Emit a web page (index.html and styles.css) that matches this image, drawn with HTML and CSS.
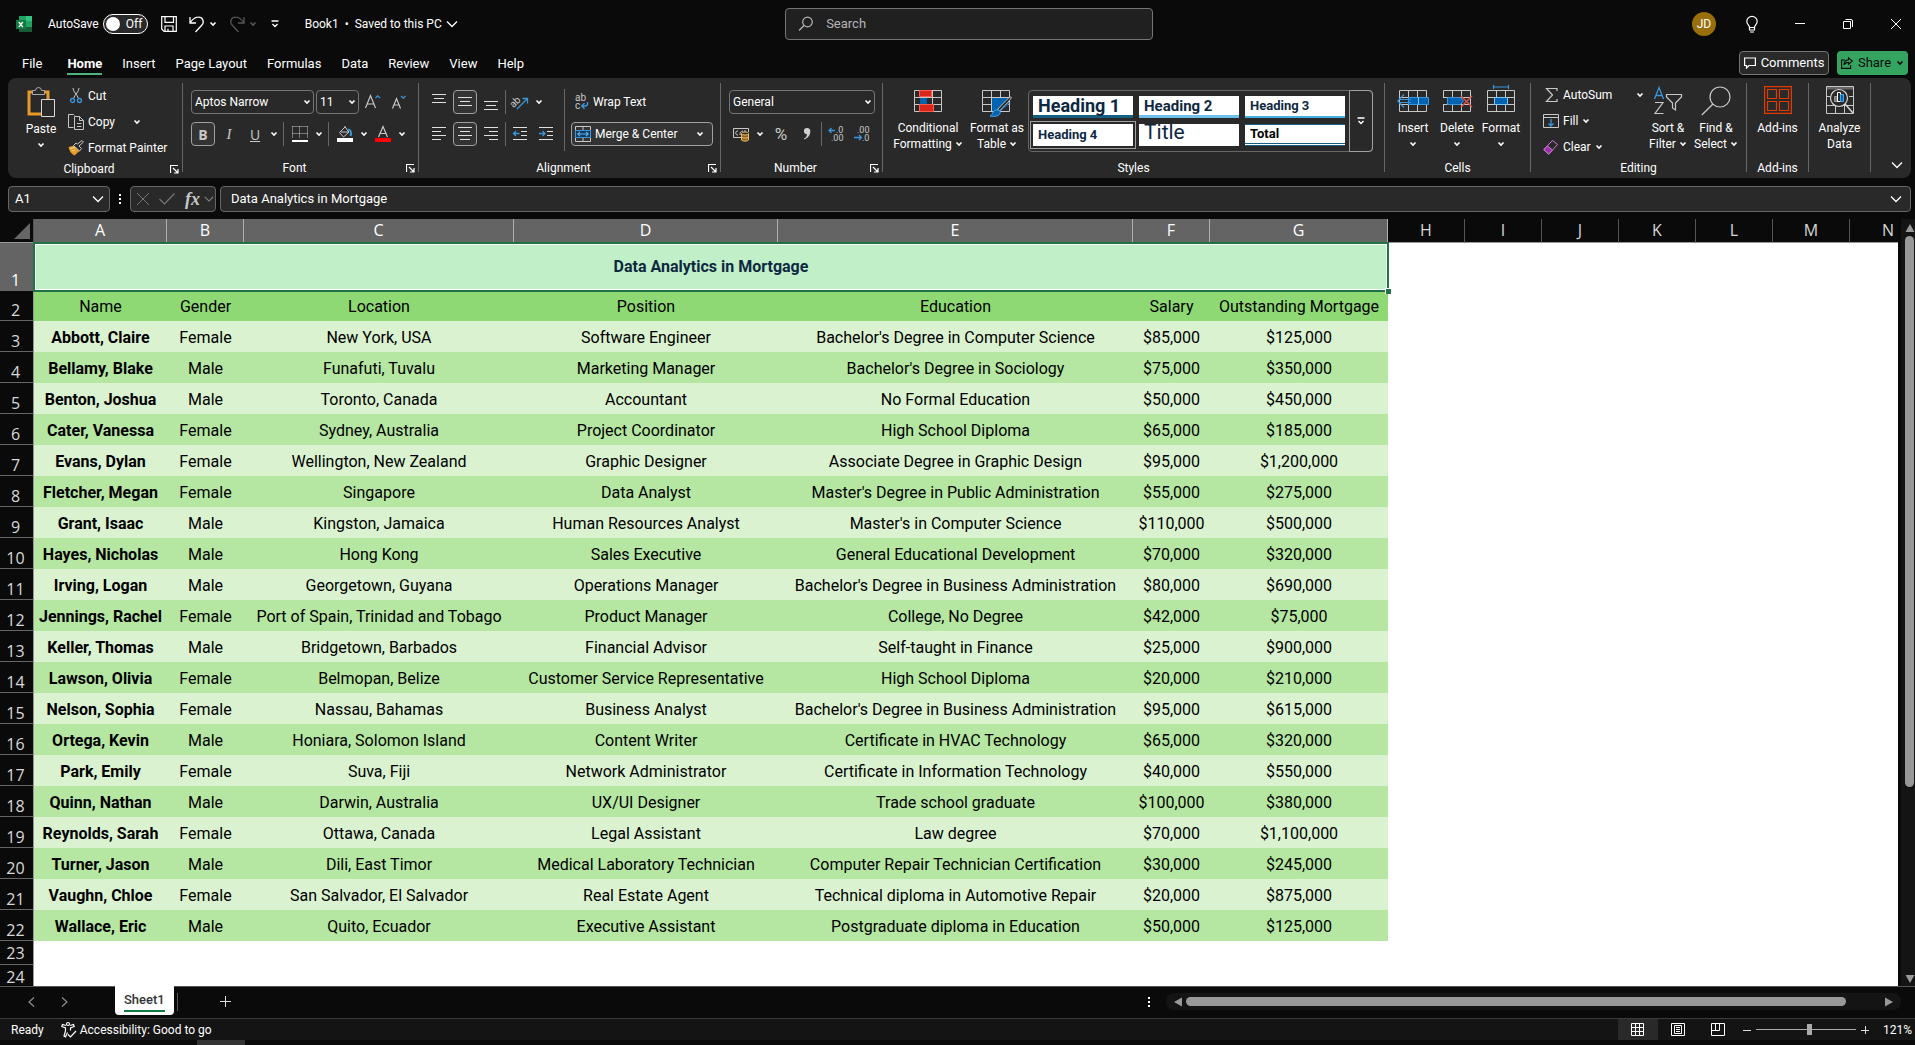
FILE: index.html
```html
<!DOCTYPE html>
<html lang="en">
<head>
    <meta charset="UTF-8">
    <meta name="viewport" content="width=device-width, initial-scale=1.0">
    <title>Book1 - Excel</title>
    <link rel="stylesheet" href="styles.css">
</head>
<body>
    <!-- shared icons -->
    <svg class="defs" width="0" height="0">
        <symbol id="chev" viewBox="0 0 8 8"><path d="M1.5 2.5 4 5l2.5-2.5" fill="none" stroke="currentColor" stroke-width="1.6"/></symbol>
        <symbol id="chev-big" viewBox="0 0 12 12"><path d="M1 3.5 6 8.5l5-5" fill="none" stroke="currentColor" stroke-width="1.3"/></symbol>
        <symbol id="launch" viewBox="0 0 9 9"><path d="M.5 8V.5H8M3 3l4.5 4.5M8 4v4H4" fill="none" stroke="currentColor" stroke-width="1.2"/></symbol>
        <symbol id="grid" viewBox="0 0 28 22"><path d="M.5.5h27v21H.5zM.5 7.5h27M.5 14.5h27M9.5.5v21M18.5.5v21" fill="none" stroke="#c8c8c8"/></symbol>
    </svg>

    <div class="app">
        <header class="title-bar">
            <div class="title-left">
                <svg class="logo" width="16" height="16" viewBox="0 0 16 16">
                    <path d="M3 0h13v16H3z" fill="#21a366"/><path d="M10 0h6v5h-6z" fill="#33c481"/><path d="M3 5h7v6H3z" fill="#107c41"/><path d="M3 11h13v5H3z" fill="#185c37"/>
                    <path d="M0 4h10v9H0z" fill="#107c41"/><path d="m2.8 6 4 5M6.8 6l-4 5" stroke="#fff" stroke-width="1.3"/>
                </svg>
                <label class="autosave">AutoSave
                    <input type="checkbox">
                    <span class="toggle"><span class="knob"></span>Off</span>
                </label>
                <button class="qat save" aria-label="Save">
                    <svg width="16" height="16" viewBox="0 0 16 16"><path d="M.7.7h14.6v14.6H3L.7 13zM4 .7v5.6h8.5V.7M4 15.3V10h8v5.3M7 15.3v-2.6" fill="none" stroke="#fff" stroke-width="1.2"/></svg>
                </button>
                <button class="qat" aria-label="Undo">
                    <svg width="16" height="17" viewBox="0 0 16 17"><path d="M1 1v6h6M1.3 6.5C4 2.5 7 1.2 9.5 1.2a4.6 4.6 0 0 1 3.2 8L6.5 16" fill="none" stroke="#fff" stroke-width="1.3"/></svg>
                    <svg class="ch" width="8" height="8"><use href="#chev"/></svg>
                </button>
                <button class="qat off" aria-label="Redo">
                    <svg width="16" height="17" viewBox="0 0 16 17"><path d="M15 1v6H9M14.7 6.5C12 2.5 9 1.2 6.5 1.2a4.6 4.6 0 0 0-3.2 8L9.5 16" fill="none" stroke="currentColor" stroke-width="1.3"/></svg>
                    <svg class="ch" width="8" height="8"><use href="#chev"/></svg>
                </button>
                <button class="qat" aria-label="Customize Quick Access Toolbar">
                    <svg width="8" height="8" viewBox="0 0 8 8"><path d="M.5 1h7M1.5 4 4 6.5 6.5 4" fill="none" stroke="#fff" stroke-width="1.4"/></svg>
                </button>
                <button class="doc-name">Book1 &nbsp;•&nbsp; Saved to this PC <svg width="12" height="12"><use href="#chev-big"/></svg></button>
            </div>
            <label class="search">
                <svg width="16" height="16" viewBox="0 0 16 16"><circle cx="9.5" cy="6" r="4.8" fill="none" stroke="#b5b5b5" stroke-width="1.2"/><path d="m6 9.5-5 5" stroke="#b5b5b5" stroke-width="1.2"/></svg>
                <input type="text" placeholder="Search" aria-label="Search">
            </label>
            <div class="title-right">
                <button class="win" aria-label="Account"><span class="avatar">JD</span></button>
                <button class="win" aria-label="Tips">
                    <svg width="12" height="17" viewBox="0 0 12 17"><path d="M3.5 11.5C3.5 9 .8 8.500.8 5.5a5 5 0 0 1 10.4 0c0 3-2.7 3.5-2.7 6zM3.5 11.5V14h5v-2.5M4 16h4" fill="none" stroke="#fff" stroke-width="1.2"/></svg>
                </button>
                <button class="win" aria-label="Minimize"><svg width="10" height="10" viewBox="0 0 10 10"><path d="M0 4.5h10" stroke="#fff"/></svg></button>
                <button class="win" aria-label="Restore"><svg width="10" height="10" viewBox="0 0 10 10"><path d="M.5 2.5h7v7h-7zM2.5.5H8A1.5 1.5 0 0 1 9.5 2v6" fill="none" stroke="#fff"/></svg></button>
                <button class="win close" aria-label="Close"><svg width="10" height="10" viewBox="0 0 10 10"><path d="m0 0 10 10M10 0 0 10" stroke="#fff"/></svg></button>
            </div>
        </header>

        <nav class="tabs">
            <a class="tab file" href="#">File</a>
            <a class="tab active" href="#">Home</a>
            <a class="tab" href="#">Insert</a>
            <a class="tab" href="#">Page Layout</a>
            <a class="tab" href="#">Formulas</a>
            <a class="tab" href="#">Data</a>
            <a class="tab" href="#">Review</a>
            <a class="tab" href="#">View</a>
            <a class="tab" href="#">Help</a>
            <div class="tab-actions">
                <button class="btn-comments">
                    <svg width="12" height="12" viewBox="0 0 12 12"><path d="M.6 1h10.800v7.500H5L2.500 11V8.500H.6z" fill="none" stroke="#fff" stroke-width="1.2"/></svg>
                    Comments
                </button>
                <button class="btn-share">
                    <svg width="12" height="12" viewBox="0 0 12 12"><path d="M4 3H.6v8.400h9V8M7.500.8 11.300 4 7.500 7.200V5.400C5.500 5.400 4 6 3 8c0-3 1.500-5 4.500-5.300z" fill="none" stroke="#0a0a0a" stroke-width="1.1"/></svg>
                    Share
                    <svg width="8" height="8"><use href="#chev"/></svg>
                </button>
            </div>
        </nav>

        <div class="ribbon">
            <section class="group clipboard">
                <div class="group-body">
                    <button class="big paste">
                        <svg width="28" height="30" viewBox="0 0 28 30"><path d="M7 5H2v22h13" fill="none" stroke="#e69a28" stroke-width="3"/><path d="M16 5h5v7" fill="none" stroke="#e69a28" stroke-width="3"/><path d="M5.500 7.500v-4h3a3 3 0 0 1 6 0h3v4z" fill="#292929" stroke="#a8a8a8"/><path d="M14.500 12.500h13v17h-13z" fill="#292929" stroke="#d8d8d8"/></svg>
                        <span>Paste</span>
                        <svg class="ch" width="8" height="8"><use href="#chev"/></svg>
                    </button>
                    <div class="stack">
                        <button class="small">
                            <svg width="16" height="16" viewBox="0 0 16 16"><path d="M5 0c0 4 4 6 5.500 10.500M11 0c0 4-4 6-5.500 10.500" fill="none" stroke="#c8c8c8"/><circle cx="4.500" cy="12.500" r="2" fill="none" stroke="#3a96dd" stroke-width="1.3"/><circle cx="11.500" cy="12.500" r="2" fill="none" stroke="#3a96dd" stroke-width="1.3"/></svg>
                            Cut
                        </button>
                        <button class="small">
                            <svg width="16" height="16" viewBox="0 0 16 16"><path d="M5.500 13.500h-5v-13h5l1 1" fill="none" stroke="#c8c8c8"/><path d="M6.500 2.500h5l4 4v9h-9zM11.500 2.500v4h4M9 9.500h4.500M9 12.500h4.500" fill="none" stroke="#c8c8c8"/></svg>
                            Copy
                            <svg class="ch copy-ch" width="8" height="8"><use href="#chev"/></svg>
                        </button>
                        <button class="small">
                            <svg width="16" height="16" viewBox="0 0 16 16"><path d="m.5 7 6-1.500 5 5.500-5 4.500C3.500 14 1.500 11.500.5 7z" fill="#e69a28"/><path d="m2 8.500 5-1M3.500 11l4-1" stroke="#ffd98c"/><path d="m5.500 5.500 6 5.500 2-2.500-2.500-2.500 4.500-4L14 .5 9.500 4 8 3z" fill="#292929" stroke="#c8c8c8"/></svg>
                            Format Painter
                        </button>
                    </div>
                </div>
                <div class="group-foot"><span>Clipboard</span><svg width="9" height="9"><use href="#launch"/></svg></div>
            </section>

            <section class="group font">
                <div class="group-body col">
                    <div class="row">
                        <select class="drop font-name" aria-label="Font"><option>Aptos Narrow</option></select>
                        <select class="drop font-size" aria-label="Font size"><option>11</option></select>
                        <button class="icon" aria-label="Increase font size"><svg width="18" height="18" viewBox="0 0 18 18"><path d="m1.500 15 5-12.500L11.500 15M3.300 11h6.400" fill="none" stroke="#c8c8c8" stroke-width="1.2"/><path d="m11.500 5 2.200-2.200L16 5" fill="none" stroke="#3a96dd" stroke-width="1.3"/></svg></button>
                        <button class="icon" aria-label="Decrease font size"><svg width="18" height="18" viewBox="0 0 18 18"><path d="M2.500 15.500 6.500 5.500l4 10M4 12h5" fill="none" stroke="#c8c8c8" stroke-width="1.2"/><path d="M11 3l2.200 2.200L15.500 3" fill="none" stroke="#3a96dd" stroke-width="1.3"/></svg></button>
                    </div>
                    <div class="row">
                        <button class="icon on bold">B</button>
                        <button class="icon italic">I</button>
                        <button class="icon underline">U</button>
                        <button class="ch-btn" aria-label="Underline options"><svg width="8" height="8"><use href="#chev"/></svg></button>
                        <span class="sep"></span>
                        <button class="icon" aria-label="Borders"><svg width="16" height="16" viewBox="0 0 16 16"><path d="M.5.5h15M.5 7.500h15M.5.5v12M7.500.5v12M15.500.5v12" fill="none" stroke="#c8c8c8" stroke-dasharray="1 1"/><path d="M0 15h16" stroke="#fff" stroke-width="2"/></svg></button>
                        <button class="ch-btn" aria-label="Border options"><svg width="8" height="8"><use href="#chev"/></svg></button>
                        <span class="sep"></span>
                        <button class="icon" aria-label="Fill color"><svg width="16" height="16" viewBox="0 0 16 16"><path d="M2.500 6.500 8 1l4 5-5.500 5zM8 1V0M4 6h8" fill="none" stroke="#c8c8c8"/><path d="M11 3.500c3 0 3.500 3 2.500 6.500" fill="none" stroke="#3a96dd" stroke-width="2"/><path d="M0 12h16v4H0z" fill="#fff"/></svg></button>
                        <button class="ch-btn" aria-label="Fill options"><svg width="8" height="8"><use href="#chev"/></svg></button>
                        <button class="icon" aria-label="Font color"><svg width="16" height="16" viewBox="0 0 16 16"><path d="M3.500 11 8 .5 12.500 11M5 7.500h6" fill="none" stroke="#c8c8c8" stroke-width="1.2"/><path d="M0 12h16v4H0z" fill="#f00"/></svg></button>
                        <button class="ch-btn" aria-label="Font color options"><svg width="8" height="8"><use href="#chev"/></svg></button>
                    </div>
                </div>
                <div class="group-foot"><span>Font</span><svg width="9" height="9"><use href="#launch"/></svg></div>
            </section>

            <section class="group alignment">
                <div class="group-body">
                    <div class="col">
                        <div class="row">
                            <button class="icon" aria-label="Top align"><svg width="14" height="18" viewBox="0 0 14 18"><path d="M0 1.500h14M2 5.500h10M0 9.500h14" stroke="#e0e0e0"/></svg></button>
                            <button class="icon on" aria-label="Middle align"><svg width="14" height="18" viewBox="0 0 14 18"><path d="M0 4.500h14M2 8.500h10M0 12.500h14" stroke="#e0e0e0"/></svg></button>
                            <button class="icon" aria-label="Bottom align"><svg width="14" height="18" viewBox="0 0 14 18"><path d="M0 8.500h14M2 12.500h10M0 16.500h14" stroke="#e0e0e0"/></svg></button>
                            <span class="sep"></span>
                            <button class="icon" aria-label="Orientation"><svg width="18" height="16" viewBox="0 0 18 16"><text class="glyph" x="-1" y="10" transform="rotate(-45 6 8)">ab</text><path d="M6 15 16 5M11.500 4.500H16.500V9.500" fill="none" stroke="#3a96dd" stroke-width="1.3"/></svg></button>
                            <button class="ch-btn" aria-label="Orientation options"><svg width="8" height="8"><use href="#chev"/></svg></button>
                        </div>
                        <div class="row">
                            <button class="icon" aria-label="Align left"><svg width="14" height="14" viewBox="0 0 14 14"><path d="M0 .5h14M0 4.500h9M0 8.500h14M0 12.500h9" stroke="#e0e0e0"/></svg></button>
                            <button class="icon on" aria-label="Center"><svg width="14" height="14" viewBox="0 0 14 14"><path d="M0 .5h14M2 4.500h10M0 8.500h14M2 12.500h10" stroke="#e0e0e0"/></svg></button>
                            <button class="icon" aria-label="Align right"><svg width="14" height="14" viewBox="0 0 14 14"><path d="M0 .5h14M5 4.500h9M0 8.500h14M5 12.500h9" stroke="#e0e0e0"/></svg></button>
                            <span class="sep"></span>
                            <button class="icon" aria-label="Decrease indent"><svg width="14" height="14" viewBox="0 0 14 14"><path d="M0 .5h14M8 4.500h6M8 8.500h6M0 12.500h14" stroke="#e0e0e0"/><path d="M6.500 6.500h-6M3 4 .5 6.500 3 9" fill="none" stroke="#3a96dd" stroke-width="1.3"/></svg></button>
                            <button class="icon" aria-label="Increase indent"><svg width="14" height="14" viewBox="0 0 14 14"><path d="M0 .5h14M8 4.500h6M8 8.500h6M0 12.500h14" stroke="#e0e0e0"/><path d="M0 6.500h6M3.500 4 6 6.500 3.500 9" fill="none" stroke="#3a96dd" stroke-width="1.3"/></svg></button>
                        </div>
                    </div>
                    <span class="sep tall"></span>
                    <div class="col">
                        <button class="wide"><svg width="14" height="16" viewBox="0 0 14 16"><text class="glyph" x="0" y="7">ab</text><text class="glyph" x="0" y="15">c</text><path d="M12.500 8v2c0 1.500-1 2-2.500 2H7M9.500 9.200 6.700 12l2.800 2.800" fill="none" stroke="#3a96dd" stroke-width="1.5"/></svg>Wrap Text</button>
                        <button class="wide merge"><svg width="16" height="16" viewBox="0 0 16 16"><path d="M.5 4V.5h15V4M8 .5V4M.5 12v3.500h15V12M8 12v3.500" fill="none" stroke="#c8c8c8"/><path d="M.5 4.500h15v7H.5z" fill="#123a5c" stroke="#3a96dd"/><path d="M3 8h10M5 5.800 2.800 8 5 10.200M11 5.800 13.200 8 11 10.200" fill="none" stroke="#5cb3f0" stroke-width="1.2"/></svg>Merge &amp; Center<svg class="ch end" width="8" height="8"><use href="#chev"/></svg></button>
                    </div>
                </div>
                <div class="group-foot"><span>Alignment</span><svg width="9" height="9"><use href="#launch"/></svg></div>
            </section>

            <section class="group number">
                <div class="group-body col">
                    <div class="row">
                        <select class="drop format" aria-label="Number format"><option>General</option></select>
                    </div>
                    <div class="row">
                        <button class="icon" aria-label="Accounting format"><svg width="16" height="16" viewBox="0 0 16 16"><path d="M8 11.500H.5v-9h15V6" fill="none" stroke="#c8c8c8"/><path d="M5 5c-3-.5-3 4.500 0 4M10 5C7.500 5 7 7 7 9M13 5h-2" fill="none" stroke="#c8c8c8"/><path d="M8.500 7.500v6.500c1 1.500 6 1.500 7 0V7.500" fill="#8a6420" stroke="#f0c060"/><ellipse cx="12" cy="7.500" rx="3.500" ry="1.500" fill="#292929" stroke="#f0c060"/><path d="M8.500 11c1 1.500 6 1.500 7 0" fill="none" stroke="#f0c060"/></svg></button>
                        <button class="ch-btn" aria-label="Accounting options"><svg width="8" height="8"><use href="#chev"/></svg></button>
                        <button class="icon pct">%</button>
                        <button class="icon" aria-label="Comma style"><svg width="8" height="14" viewBox="0 0 8 14"><path d="M4 1a3 3 0 0 1 3.300 3.500C7.300 8 5 11 1.500 12.500l-.5-.8C3 10.500 4 9 4 7.200A3 3 0 1 1 4 1z" fill="#d0d0d0"/></svg></button>
                        <span class="sep"></span>
                        <button class="icon" aria-label="Increase decimal"><svg width="16" height="16" viewBox="0 0 16 16"><text class="glyph sm" x="8" y="7">.0</text><text class="glyph sm" x="3" y="15">.00</text><path d="M7 4.500H1M3.500 2 1 4.500 3.500 7" fill="none" stroke="#3a96dd" stroke-width="1.3"/></svg></button>
                        <button class="icon" aria-label="Decrease decimal"><svg width="16" height="16" viewBox="0 0 16 16"><text class="glyph sm" x="3" y="7">.00</text><text class="glyph sm" x="8" y="15">.0</text><path d="M0 11.500h7M5 9l2.500 2.500L5 14" fill="none" stroke="#3a96dd" stroke-width="1.3"/></svg></button>
                    </div>
                </div>
                <div class="group-foot"><span>Number</span><svg width="9" height="9"><use href="#launch"/></svg></div>
            </section>

            <section class="group styles">
                <div class="group-body">
                    <button class="big cond">
                        <svg width="28" height="28" viewBox="0 0 28 28"><g transform="translate(0 3)"><use href="#grid" width="28" height="22"/><path d="M5.500.5h12v6h-12z" fill="#d8261c" stroke="#ff5a4a"/><path d="M6 8h7v6H6z" fill="#0063b1"/><path d="M5.500 14.500h14v7h-14z" fill="#d8261c" stroke="#ff5a4a"/></g></svg>
                        <span>Conditional<br>Formatting <svg width="8" height="8"><use href="#chev"/></svg></span>
                    </button>
                    <button class="big fmt-table">
                        <svg width="30" height="28" viewBox="0 0 30 28"><g transform="translate(0 3)"><use href="#grid" width="28" height="22"/><path d="M10 8h17v6l-8 7h-9z" fill="#0063b1"/><path d="M28.500 7c2 0 1 2-11 14l-2-1.500C27 7 28 7 28.500 7z" fill="#292929" stroke="#c8c8c8"/><path d="M8 26c3-1 2-5 6-6 3-.5 5 1 4 3.500C17 26 13 27 8 26z" fill="#0063b1" stroke="#4aa8e8"/></g></svg>
                        <span>Format as<br>Table <svg width="8" height="8"><use href="#chev"/></svg></span>
                    </button>
                    <div class="gallery">
                        <div class="gallery-grid">
                            <button class="cell-style h1">Heading 1</button>
                            <button class="cell-style h2">Heading 2</button>
                            <button class="cell-style h3">Heading 3</button>
                            <button class="cell-style h4">Heading 4</button>
                            <button class="cell-style title">Title</button>
                            <button class="cell-style total">Total</button>
                        </div>
                        <button class="gallery-more" aria-label="More styles"><svg width="8" height="8" viewBox="0 0 8 8"><path d="M.5 1h7M1.500 4 4 6.500 6.500 4" fill="none" stroke="#fff" stroke-width="1.4"/></svg></button>
                    </div>
                </div>
                <div class="group-foot"><span>Styles</span></div>
            </section>

            <section class="group cells">
                <div class="group-body">
                    <button class="big">
                        <svg width="32" height="30" viewBox="0 0 32 30"><use href="#grid" x="2" y="4" width="28" height="22"/><path d="M11.500 11.500h20v7h-20z" fill="#0063b1" stroke="#3a96dd"/><path d="M21.500 11v8" stroke="#7cc4f5"/><path d="M14 13.500H2M14 16.500H2M7 8.500.8 15 7 21.500" fill="none" stroke="#3a96dd" stroke-width="1.2"/></svg>
                        <span>Insert</span>
                        <svg class="ch" width="8" height="8"><use href="#chev"/></svg>
                    </button>
                    <button class="big">
                        <svg width="32" height="30" viewBox="0 0 32 30"><use href="#grid" x="2" y="4" width="28" height="22"/><path d="M0 12h6v6H0z" fill="#292929"/><path d="M6.500 11.500h13l3 3.500-3 3.500h-13z" fill="#0063b1" stroke="#3a96dd"/><path d="m20 10 11 11M31 10 20 21" stroke="#e0504a" stroke-width="1.5"/></svg>
                        <span>Delete</span>
                        <svg class="ch" width="8" height="8"><use href="#chev"/></svg>
                    </button>
                    <button class="big">
                        <svg width="32" height="30" viewBox="0 0 32 30"><use href="#grid" x="2" y="4" width="28" height="22"/><path d="M9.500 11.500h13v7h-13z" fill="#0063b1" stroke="#7cc4f5"/><path d="M8.500-1v4M23.500-1v4M8.500 1h15" stroke="#3a96dd" stroke-width="1.2"/></svg>
                        <span>Format</span>
                        <svg class="ch" width="8" height="8"><use href="#chev"/></svg>
                    </button>
                </div>
                <div class="group-foot"><span>Cells</span></div>
            </section>

            <section class="group editing">
                <div class="group-body">
                    <div class="stack">
                        <button class="small">
                            <svg width="16" height="16" viewBox="0 0 16 16"><path d="M14 4V1.500H3.500L9.500 8l-6 6.500H14V12" fill="none" stroke="#c8c8c8" stroke-width="1.2"/></svg>
                            AutoSum
                            <svg class="ch end" width="8" height="8"><use href="#chev"/></svg>
                        </button>
                        <button class="small">
                            <svg width="16" height="16" viewBox="0 0 16 16"><path d="M.5 1.500h15v13H.5zM.5 4.500h15" fill="none" stroke="#c8c8c8"/><path d="M8 6v7M5.500 10.500 8 13l2.500-2.500" fill="none" stroke="#3a96dd" stroke-width="1.3"/></svg>
                            Fill <svg class="ch" width="8" height="8"><use href="#chev"/></svg>
                        </button>
                        <button class="small">
                            <svg width="16" height="16" viewBox="0 0 16 16"><path d="M.8 10.500 9.500 1.500l5 4-8.700 9.700z" fill="none" stroke="#d080d8"/><path d="M.8 10.500 4.500 7l5 4-3.700 4.200z" fill="#9a30a8" stroke="#d080d8"/></svg>
                            Clear <svg class="ch" width="8" height="8"><use href="#chev"/></svg>
                        </button>
                    </div>
                    <button class="big pair">
                        <svg width="30" height="30" viewBox="0 0 30 30"><path d="M1.500 13 6 1.500 10.500 13M3 9.500h6" fill="none" stroke="#3a96dd" stroke-width="1.3"/><path d="M2 16.500h8L2 27.500h8.500" fill="none" stroke="#c8c8c8" stroke-width="1.2"/><path d="M13.500 8.500h15V11l-6 6v7l-3-2v-5l-6-6z" fill="none" stroke="#c8c8c8" stroke-width="1.2"/></svg>
                        <span>Sort &amp;<br>Filter <svg width="8" height="8"><use href="#chev"/></svg></span>
                    </button>
                    <button class="big pair">
                        <svg width="30" height="30" viewBox="0 0 30 30"><circle cx="19" cy="11" r="10" fill="none" stroke="#c8c8c8" stroke-width="1.2"/><path d="M12 18 .8 29" stroke="#c8c8c8" stroke-width="1.3"/></svg>
                        <span>Find &amp;<br>Select <svg width="8" height="8"><use href="#chev"/></svg></span>
                    </button>
                </div>
                <div class="group-foot"><span>Editing</span></div>
            </section>

            <section class="group addins">
                <div class="group-body">
                    <button class="big">
                        <svg width="28" height="28" viewBox="0 0 28 28"><path d="M.6.6h26.800v26.800H.6zM3.500 3.500h9v9h-9zM15.500 3.500h9v9h-9zM3.500 15.500h9v9h-9zM15.500 15.500h9v9h-9z" fill="none" stroke="#e03c00" stroke-width="1.2"/></svg>
                        <span>Add-ins</span>
                    </button>
                </div>
                <div class="group-foot"><span>Add-ins</span></div>
            </section>

            <section class="group addins">
                <div class="group-body">
                    <button class="big">
                        <svg width="28" height="28" viewBox="0 0 28 28"><path d="M.5.5h27v3H.5z" fill="#666"/><path d="M.5.5h27v27H.5zM.5 10.500h4M.5 19.500h27M9.500 20v7.500M18.500 20v7.500M23 10.500h4.500" fill="none" stroke="#c8c8c8"/><circle cx="13" cy="12" r="8.500" fill="#292929" stroke="#d8d8d8" stroke-width="1.2"/><path d="m19 18 8 9" stroke="#d8d8d8" stroke-width="1.5"/><path d="M8.500 10.500h3v5h-3z" fill="#777" stroke="#999"/><path d="M11.500 6.500h3v9h-3z" fill="none" stroke="#fff"/><path d="M14.500 8.500h3v7h-3z" fill="#0063b1" stroke="#4aa8e8"/></svg>
                        <span>Analyze<br>Data</span>
                    </button>
                </div>
            </section>
            <button class="collapse" aria-label="Collapse ribbon"><svg width="12" height="12"><use href="#chev-big"/></svg></button>
        </div>

        <div class="formula-bar">
            <label class="box name-box"><input type="text" value="A1" aria-label="Name box"><svg width="12" height="12"><use href="#chev-big"/></svg></label>
            <span class="dots"></span>
            <div class="box fx-box">
                <svg width="12" height="12" viewBox="0 0 12 12"><path d="m0 0 12 12M12 0 0 12" stroke="#777"/></svg>
                <svg width="16" height="12" viewBox="0 0 16 12"><path d="m.5 6 5 5L15.500.5" fill="none" stroke="#777" stroke-width="1.2"/></svg>
                <span class="fx">fx</span>
                <svg class="dim" width="10" height="10"><use href="#chev-big" width="10" height="10"/></svg>
            </div>
            <label class="box formula"><input type="text" value="Data Analytics in Mortgage" aria-label="Formula bar"><svg width="12" height="12"><use href="#chev-big"/></svg></label>
        </div>

        <main class="sheet">
            <div class="grid-view">
                <table>
                    <colgroup>
                        <col class="c-row"><col class="c-a"><col class="c-s"><col class="c-c"><col class="c-d"><col class="c-e"><col class="c-s"><col class="c-g"><col class="c-s"><col class="c-s"><col class="c-s"><col class="c-s"><col class="c-s"><col class="c-s"><col>
                    </colgroup>
                    <thead>
                        <tr><th class="corner"><svg width="16" height="16" viewBox="0 0 16 16"><path d="M16 0v16H0z" fill="#666"/></svg></th><th class="sel">A</th><th class="sel">B</th><th class="sel">C</th><th class="sel">D</th><th class="sel">E</th><th class="sel">F</th><th class="sel">G</th><th>H</th><th>I</th><th>J</th><th>K</th><th>L</th><th>M</th><th class="last">N</th></tr>
                    </thead>
                    <tbody>
                        <tr class="r-title"><th class="sel">1</th><td colspan="7">Data Analytics in Mortgage<span class="handle"></span></td></tr>
                        <tr class="r-head"><th>2</th><td>Name</td><td>Gender</td><td>Location</td><td>Position</td><td>Education</td><td>Salary</td><td>Outstanding Mortgage</td></tr>
                        <tr><th>3</th><td>Abbott, Claire</td><td>Female</td><td>New York, USA</td><td>Software Engineer</td><td>Bachelor's Degree in Computer Science</td><td>$85,000</td><td>$125,000</td></tr>
                        <tr><th>4</th><td>Bellamy, Blake</td><td>Male</td><td>Funafuti, Tuvalu</td><td>Marketing Manager</td><td>Bachelor's Degree in Sociology</td><td>$75,000</td><td>$350,000</td></tr>
                        <tr><th>5</th><td>Benton, Joshua</td><td>Male</td><td>Toronto, Canada</td><td>Accountant</td><td>No Formal Education</td><td>$50,000</td><td>$450,000</td></tr>
                        <tr><th>6</th><td>Cater, Vanessa</td><td>Female</td><td>Sydney, Australia</td><td>Project Coordinator</td><td>High School Diploma</td><td>$65,000</td><td>$185,000</td></tr>
                        <tr><th>7</th><td>Evans, Dylan</td><td>Female</td><td>Wellington, New Zealand</td><td>Graphic Designer</td><td>Associate Degree in Graphic Design</td><td>$95,000</td><td>$1,200,000</td></tr>
                        <tr><th>8</th><td>Fletcher, Megan</td><td>Female</td><td>Singapore</td><td>Data Analyst</td><td>Master's Degree in Public Administration</td><td>$55,000</td><td>$275,000</td></tr>
                        <tr><th>9</th><td>Grant, Isaac</td><td>Male</td><td>Kingston, Jamaica</td><td>Human Resources Analyst</td><td>Master's in Computer Science</td><td>$110,000</td><td>$500,000</td></tr>
                        <tr><th>10</th><td>Hayes, Nicholas</td><td>Male</td><td>Hong Kong</td><td>Sales Executive</td><td>General Educational Development</td><td>$70,000</td><td>$320,000</td></tr>
                        <tr><th>11</th><td>Irving, Logan</td><td>Male</td><td>Georgetown, Guyana</td><td>Operations Manager</td><td>Bachelor's Degree in Business Administration</td><td>$80,000</td><td>$690,000</td></tr>
                        <tr><th>12</th><td>Jennings, Rachel</td><td>Female</td><td>Port of Spain, Trinidad and Tobago</td><td>Product Manager</td><td>College, No Degree</td><td>$42,000</td><td>$75,000</td></tr>
                        <tr><th>13</th><td>Keller, Thomas</td><td>Male</td><td>Bridgetown, Barbados</td><td>Financial Advisor</td><td>Self-taught in Finance</td><td>$25,000</td><td>$900,000</td></tr>
                        <tr><th>14</th><td>Lawson, Olivia</td><td>Female</td><td>Belmopan, Belize</td><td>Customer Service Representative</td><td>High School Diploma</td><td>$20,000</td><td>$210,000</td></tr>
                        <tr><th>15</th><td>Nelson, Sophia</td><td>Female</td><td>Nassau, Bahamas</td><td>Business Analyst</td><td>Bachelor's Degree in Business Administration</td><td>$95,000</td><td>$615,000</td></tr>
                        <tr><th>16</th><td>Ortega, Kevin</td><td>Male</td><td>Honiara, Solomon Island</td><td>Content Writer</td><td>Certificate in HVAC Technology</td><td>$65,000</td><td>$320,000</td></tr>
                        <tr><th>17</th><td>Park, Emily</td><td>Female</td><td>Suva, Fiji</td><td>Network Administrator</td><td>Certificate in Information Technology</td><td>$40,000</td><td>$550,000</td></tr>
                        <tr><th>18</th><td>Quinn, Nathan</td><td>Male</td><td>Darwin, Australia</td><td>UX/UI Designer</td><td>Trade school graduate</td><td>$100,000</td><td>$380,000</td></tr>
                        <tr><th>19</th><td>Reynolds, Sarah</td><td>Female</td><td>Ottawa, Canada</td><td>Legal Assistant</td><td>Law degree</td><td>$70,000</td><td>$1,100,000</td></tr>
                        <tr><th>20</th><td>Turner, Jason</td><td>Male</td><td>Dili, East Timor</td><td>Medical Laboratory Technician</td><td>Computer Repair Technician Certification</td><td>$30,000</td><td>$245,000</td></tr>
                        <tr><th>21</th><td>Vaughn, Chloe</td><td>Female</td><td>San Salvador, El Salvador</td><td>Real Estate Agent</td><td>Technical diploma in Automotive Repair</td><td>$20,000</td><td>$875,000</td></tr>
                        <tr><th>22</th><td>Wallace, Eric</td><td>Male</td><td>Quito, Ecuador</td><td>Executive Assistant</td><td>Postgraduate diploma in Education</td><td>$50,000</td><td>$125,000</td></tr>
                        <tr class="r-empty"><th>23</th></tr>
                        <tr class="r-empty"><th>24</th></tr>
                    </tbody>
                </table>
            </div>
            <div class="vscroll">
                <svg width="10" height="8" viewBox="0 0 10 8"><path d="M5 0l4.500 8h-9z" fill="#999"/></svg>
                <div class="track"><div class="thumb"></div></div>
                <svg width="10" height="8" viewBox="0 0 10 8"><path d="M.5 0h9L5 8z" fill="#999"/></svg>
            </div>
        </main>

        <div class="sheet-bar">
            <button class="nav-btn" aria-label="Previous sheet"><svg width="7" height="10" viewBox="0 0 7 10"><path d="M6 .5 1 5l5 4.500" fill="none" stroke="#888" stroke-width="1.3"/></svg></button>
            <button class="nav-btn" aria-label="Next sheet"><svg width="7" height="10" viewBox="0 0 7 10"><path d="m1 .5 5 4.500-5 4.500" fill="none" stroke="#888" stroke-width="1.3"/></svg></button>
            <button class="sheet-tab"><span>Sheet1</span></button>
            <span class="tab-sep"></span>
            <button class="nav-btn add" aria-label="New sheet"><svg width="11" height="11" viewBox="0 0 11 11"><path d="M0 5.500h11M5.500 0v11" stroke="#ddd"/></svg></button>
            <span class="dots"></span>
            <div class="hscroll">
                <svg width="8" height="10" viewBox="0 0 8 10"><path d="M8 .5v9L0 5z" fill="#999"/></svg>
                <div class="track"><div class="thumb"></div></div>
                <svg width="8" height="10" viewBox="0 0 8 10"><path d="M0 .5v9L8 5z" fill="#999"/></svg>
            </div>
        </div>

        <footer class="status">
            <span class="ready">Ready</span>
            <button class="access">
                <svg width="16" height="16" viewBox="0 0 16 16"><circle cx="7" cy="2" r="1.500" fill="none" stroke="#fff" stroke-width="1.2"/><path d="M5 3.500 1.500 2.500.8 4.500 4.500 6v3l-1.500 5 1.500.8L6.500 10.500M9 3.500l3.500-1 .7 2L9.500 6v2.500M7 12.500l2.500 2.500L15 9" fill="none" stroke="#fff" stroke-width="1.2"/></svg>
                Accessibility: Good to go
            </button>
            <button class="view on" aria-label="Normal view"><svg width="14" height="14" viewBox="0 0 14 14"><path d="M.5.5h12v12H.5zM.5 4.500h12M.5 8.500h12M4.500.5v12M8.500.5v12" fill="none" stroke="#fff"/></svg></button>
            <button class="view" aria-label="Page layout view"><svg width="14" height="14" viewBox="0 0 14 14"><path d="M.5.5h13v12H.5zM3.500 2.500h7v8h-7zM5 4.500h4M5 6.500h4M5 8.500h4" fill="none" stroke="#fff"/></svg></button>
            <button class="view" aria-label="Page break preview"><svg width="14" height="14" viewBox="0 0 14 14"><path d="M.5.5h13v12H.5zM.5 7.500h8V.5M4.500.5v7" fill="none" stroke="#fff"/></svg></button>
            <button class="zoom-btn" aria-label="Zoom out"><svg width="8" height="8" viewBox="0 0 8 8"><path d="M0 4.500h8" stroke="#ddd"/></svg></button>
            <input class="zoom" type="range" min="10" max="215" value="121" aria-label="Zoom">
            <button class="zoom-btn" aria-label="Zoom in"><svg width="8" height="8" viewBox="0 0 8 8"><path d="M0 4.500h8M4.500 0v8" stroke="#ddd"/></svg></button>
            <span class="pct-label">121%</span>
        </footer>
        <div class="dock"><span></span></div>
    </div>
</body>
</html>
```
FILE: styles.css
```css
* {
    box-sizing: border-box;
}
body {
    margin: 0;
    background: #0a0a0a;
    color: #fff;
    font-family: Roboto, "Open Sans", sans-serif;
    font-size: 12px;
    line-height: 16px;
}
button, input, select {
    font: inherit;
    color: inherit;
    background: none;
    border: none;
    padding: 0;
    margin: 0;
}
button {
    display: flex;
    align-items: center;
    justify-content: center;
    white-space: nowrap;
}
svg {
    flex: none;
    overflow: visible;
}
.defs {
    position: absolute;
}
.app {
    display: flex;
    flex-direction: column;
    height: 100vh;
    overflow: hidden;
}

/* title bar */
.title-bar {
    display: grid;
    grid-template-columns: 41% 368px 1fr;
    align-items: center;
    height: 48px;
}
.title-left {
    display: flex;
    align-items: center;
    padding-left: 16px;
}
.autosave {
    display: flex;
    align-items: center;
    gap: 4px;
    margin: 0 13px 0 16px;
}
.autosave input {
    position: absolute;
    opacity: 0;
}
.toggle {
    display: flex;
    align-items: center;
    gap: 6px;
    width: 45px;
    height: 20px;
    padding-left: 2px;
    border: 1px solid #fff;
    border-radius: 10px;
    background: #292929;
}
.knob {
    width: 14px;
    height: 14px;
    border-radius: 50%;
    background: #fff;
}
.qat {
    gap: 4px;
    margin-right: 12px;
}
.qat.off {
    color: #555;
    margin-right: 14px;
}
.doc-name {
    margin-left: 14px;
    gap: 4px;
}
.search {
    display: flex;
    align-items: center;
    gap: 12px;
    height: 32px;
    padding: 0 12px;
    border: 1px solid #757575;
    border-radius: 4px;
    background: #202020;
}
.search input {
    flex: 1;
    font-size: 13px;
    outline: none;
}
.search input::placeholder {
    color: #b5b5b5;
    opacity: 1;
}
.title-right {
    display: flex;
    justify-content: flex-end;
}
.win {
    width: 48px;
    height: 32px;
}
.win.close {
    width: 43px;
    padding-left: 5px;
}
.avatar {
    width: 24px;
    height: 24px;
    border-radius: 50%;
    background: #986f0b;
    line-height: 24px;
}

/* ribbon tabs */
.tabs {
    display: flex;
    align-items: center;
    gap: 20px;
    height: 30px;
    padding: 0 7px 0 22px;
}
.tab {
    height: 24px;
    border-bottom: 2px solid transparent;
    color: #fff;
    font-size: 13px;
    line-height: 26px;
    text-decoration: none;
}
.tab.file {
    margin-right: 5px;
}
.tab.active {
    border-color: #4fb37c;
    font-weight: 700;
}
.tab-actions {
    display: flex;
    gap: 8px;
    margin-left: auto;
}
.btn-comments, .btn-share {
    height: 24px;
    gap: 5px;
    border-radius: 4px;
    font-size: 13px;
}
.btn-comments {
    width: 90px;
    border: 1px solid #757575;
    background: #292929;
}
.btn-share {
    width: 71px;
    background: #35a460;
    color: #0a0a0a;
}

/* ribbon */
.ribbon {
    display: flex;
    height: 100px;
    margin: 0 4px 0 8px;
    padding: 5px 0 6px;
    border-radius: 8px;
    background: #292929;
}
.group {
    display: flex;
    flex-direction: column;
    justify-content: space-between;
    border-right: 1px solid #666;
}
.group-body {
    display: flex;
    padding: 7px 0 0 8px;
}
.group-foot {
    display: flex;
    align-items: center;
    justify-content: center;
    height: 16px;
    margin-bottom: -4px;
}
.group-foot span {
    flex: 1;
    text-align: center;
}
.group-foot svg {
    margin-right: 3px;
}
.col {
    display: flex;
    flex-direction: column;
    gap: 8px;
}
.row {
    display: flex;
    align-items: center;
    gap: 2px;
    height: 24px;
}
.stack {
    display: flex;
    flex-direction: column;
}
.clipboard { width: 175px; }
.font { width: 236px; }
.alignment { width: 302px; }
.number { width: 162px; }
.styles { width: 502px; }
.cells { width: 146px; }
.editing { width: 216px; }
.addins { width: 62px; }
.clipboard .group-body {
    padding: 0 0 0 6px;
}
.styles .group-body {
    padding-left: 7px;
}
.cells .group-body, .editing .group-body, .addins .group-body {
    padding: 3px 0 0 6px;
}
.addins .group-body {
    padding-left: 0;
}
.editing .group-body {
    padding-left: 12px;
}
.big {
    flex-direction: column;
    justify-content: flex-start;
    width: 44px;
    gap: 4px;
}
.paste {
    width: 54px;
    padding-top: 4px;
}
.cond {
    width: 76px;
}
.fmt-table {
    width: 62px;
}
.cond, .fmt-table {
    margin-top: -3px;
    gap: 5px;
}
.pair {
    width: 48px;
}
.addins .big {
    width: 100%;
    gap: 6px;
}
.small {
    justify-content: flex-start;
    width: 106px;
    height: 26px;
    gap: 4px;
}
.copy-ch {
    margin-left: 14px;
}
.editing .stack {
    margin-top: -4px;
}
.editing .small {
    width: 101px;
}
.ch.end {
    margin-left: auto;
}
.icon {
    width: 24px;
    height: 24px;
    color: #c8c8c8;
}
.icon.on {
    border: 1px solid #a0a0a0;
    border-radius: 4px;
    background: #333;
}
.bold {
    font: bold 14px "Open Sans", sans-serif;
}
.italic {
    font: italic 15px "Liberation Serif", serif;
}
.underline {
    font: 14px "Open Sans", sans-serif;
    text-decoration: underline;
}
.pct {
    margin-left: 2px;
    font-size: 17px;
}
.ch-btn {
    width: 10px;
    height: 24px;
}
.sep {
    width: 1px;
    height: 24px;
    background: #666;
}
.font .sep {
    margin: 0 2px;
}
.sep.tall {
    height: 62px;
    margin: -1px 6px 0 5px;
}
.alignment .group-body > .col:first-child {
    width: 132px;
}
.drop {
    height: 24px;
    padding: 0 20px 0 3px;
    border: 1px solid #757575;
    border-radius: 4px;
    appearance: none;
    background: #292929 url("data:image/svg+xml,%3Csvg xmlns='http://www.w3.org/2000/svg' width='8' height='8'%3E%3Cpath d='M1.5 2.5 4 5l2.5-2.5' fill='none' stroke='white' stroke-width='1.6'/%3E%3C/svg%3E") no-repeat right 2px center;
}
.font-name { width: 123px; }
.font-size { width: 43px; }
.format { width: 146px; }
.wide {
    justify-content: flex-start;
    width: 142px;
    height: 24px;
    padding: 0 8px 0 3px;
    gap: 4px;
    border: 1px solid transparent;
}
.merge {
    border: 1px solid #a0a0a0;
    border-radius: 4px;
    background: #333;
}
.glyph {
    fill: #c8c8c8;
    font: 10px Roboto, sans-serif;
}
.glyph.sm {
    font-size: 9px;
}
.gallery {
    display: flex;
    width: 345px;
    height: 62px;
    border: 1px solid #666;
    border-radius: 4px;
}
.gallery-grid {
    flex: 1;
    display: grid;
    grid-template-columns: repeat(3, 100px);
    grid-template-rows: 22px 22px;
    gap: 6px;
    padding: 5px 4px;
}
.gallery-more {
    width: 24px;
    margin: -1px;
    border: 1px solid #a0a0a0;
    border-radius: 0 4px 4px 0;
}
.cell-style {
    justify-content: flex-start;
    padding-left: 5px;
    background: #fff;
    color: #0e2841;
    font-weight: 700;
}
.h1 {
    border-bottom: 3px solid #156082;
    font-size: 18px;
}
.h2 {
    border-bottom: 3px solid #6fc0e8;
    font-size: 15px;
}
.h3 {
    border-bottom: 2px solid #45b0e1;
    font-size: 13px;
}
.h4 {
    outline: 1px solid #a0a0a0;
    outline-offset: 2px;
    font-size: 13px;
}
.title {
    align-items: flex-start;
    font-size: 21px;
    font-weight: 400;
}
.total {
    border-top: 1px solid #156082;
    border-bottom: 3px double #156082;
    color: #000;
    font-size: 13px;
}
.collapse {
    margin: auto 8px 1px auto;
}

/* formula bar */
.formula-bar {
    display: flex;
    align-items: center;
    gap: 4px;
    padding: 8px 4px 7px 8px;
}
.box {
    display: flex;
    align-items: center;
    height: 26px;
    border: 1px solid #666;
    border-radius: 4px;
    background: #292929;
    font-size: 13px;
}
.box input {
    flex: 1;
    min-width: 0;
    outline: none;
}
.name-box {
    width: 102px;
    padding: 0 5px 0 6px;
}
.dots {
    width: 12px;
    height: 12px;
    background: radial-gradient(circle, #fff 1px, transparent 1px) center / 12px 4px;
}
.fx-box {
    width: 86px;
    padding: 0 2px 0 6px;
    gap: 10px;
}
.fx {
    width: 16px;
    color: #c8c8c8;
    font: italic bold 18px "Liberation Serif", serif;
}
.dim {
    margin-left: -6px;
    color: #888;
}
.formula {
    flex: 1;
    padding: 0 8px 0 10px;
}

/* sheet */
.sheet {
    flex: 1;
    display: flex;
    min-height: 0;
}
.grid-view {
    flex: 1;
    min-width: 0;
    overflow: hidden;
    background: #fff;
}
table {
    width: 100%;
    table-layout: fixed;
    border-collapse: separate;
    border-spacing: 0;
    color: #000;
    font-size: 16px;
    text-align: center;
}
.c-row { width: 34px; }
.c-a { width: 133px; }
.c-s { width: 77px; }
.c-c { width: 270px; }
.c-d { width: 264px; }
.c-e { width: 355px; }
.c-g { width: 178px; }
th, td {
    height: 31px;
    padding: 0;
    white-space: nowrap;
}
td {
    padding-top: 2px;
}
th {
    background: #0a0a0a;
    color: #d8d8d8;
    font-family: "Open Sans", sans-serif;
    font-weight: 400;
}
thead th {
    height: 24px;
    padding-bottom: 2px;
    border-right: 1px solid #555;
    border-bottom: 1px solid #999;
    line-height: 20px;
}
thead .sel {
    border-right-color: #b0b0b0;
}
th.sel {
    background: #646464;
    color: #fff;
}
thead .last {
    padding-left: 28px;
    border-right: none;
}
thead .corner {
    padding: 0 3px 0 0;
}
.corner svg {
    display: block;
    margin-left: auto;
}
tbody th {
    padding-right: 2px;
    border-right: 1px solid #999;
    border-bottom: 1px solid #666;
    vertical-align: bottom;
    line-height: 20px;
}
tbody td:nth-child(2) {
    font-weight: 700;
}
tbody tr:nth-child(odd) td {
    background: #daf2d0;
}
tbody tr:nth-child(even) td {
    background: #b5e6a2;
}
.r-title th, .r-title td {
    height: 48px;
}
tbody tr.r-title td {
    position: relative;
    padding-top: 0;
    background: #c1f0c8;
    color: #0e2841;
}
.r-title td::after {
    content: "";
    position: absolute;
    inset: -1px;
    border: 2px solid #217346;
    box-shadow: inset 0 0 0 1px #fff;
}
.handle {
    position: absolute;
    right: -3px;
    bottom: -3px;
    z-index: 1;
    width: 6px;
    height: 6px;
    border: 1px solid #fff;
    border-width: 1px 0 0 1px;
    background: #217346;
}
tbody tr.r-head td {
    background: #8ed973;
    font-weight: 400;
}
.r-head th, .r-head td {
    height: 30px;
}
.r-empty th {
    height: 24px;
    vertical-align: middle;
}
.vscroll {
    display: flex;
    flex-direction: column;
    align-items: center;
    width: 17px;
    padding: 5px 0 3px 3px;
    background: #141414;
    border-left: 3px solid #0a0a0a;
}
.vscroll .track {
    flex: 1;
    margin: 4px 0;
}
.vscroll .thumb {
    width: 9px;
    height: 75%;
    border-radius: 5px;
    background: #999;
}

/* sheet tabs and horizontal scroll */
.sheet-bar {
    display: flex;
    align-items: center;
    height: 32px;
    padding: 0 15px 2px;
    border-top: 1px solid #555;
}
.nav-btn {
    width: 33px;
    height: 24px;
}
.sheet-tab {
    align-self: flex-start;
    height: 29px;
    margin: -1px 3px 0 34px;
    padding: 0 9px;
    border-radius: 0 0 4px 4px;
    background: #fff;
    color: #333;
    font-size: 13px;
    font-weight: 500;
}
.sheet-tab span {
    border-bottom: 2px solid #107c41;
    line-height: 20px;
}
.tab-sep {
    width: 1px;
    height: 18px;
    background: #555;
}
.add {
    margin-left: 31px;
}
.sheet-bar .dots {
    margin-left: auto;
    margin-right: 11px;
}
.hscroll {
    display: flex;
    align-items: center;
    width: 39%;
    height: 17px;
    margin-right: -1px;
    padding: 0 8px;
    border-radius: 8px;
    background: #141414;
}
.hscroll .track {
    flex: 1;
    padding: 0 4px;
}
.hscroll .thumb {
    width: 95%;
    height: 9px;
    border-radius: 5px;
    background: #999;
}

/* status bar */
.status {
    display: flex;
    align-items: center;
    height: 22px;
    padding: 0 3px 0 11px;
    border-top: 1px solid #3c3c3c;
    background: #141414;
}
.access {
    margin: 0 auto 0 17px;
    gap: 3px;
}
.view {
    width: 40px;
    height: 21px;
}
.view.on {
    background: #292929;
}
.zoom-btn {
    width: 18px;
}
.zoom {
    width: 100px;
    height: 12px;
    appearance: none;
    background: linear-gradient(#aaa, #aaa) center / 100% 1px no-repeat;
}
.zoom::-webkit-slider-thumb {
    appearance: none;
    width: 5px;
    height: 11px;
    background: #aaa;
}
.pct-label {
    margin-left: 9px;
}
.dock {
    height: 5px;
    padding-left: 197px;
    background: #0a0a0a;
}
.dock span {
    display: block;
    width: 48px;
    height: 5px;
    background: #333;
}
```
